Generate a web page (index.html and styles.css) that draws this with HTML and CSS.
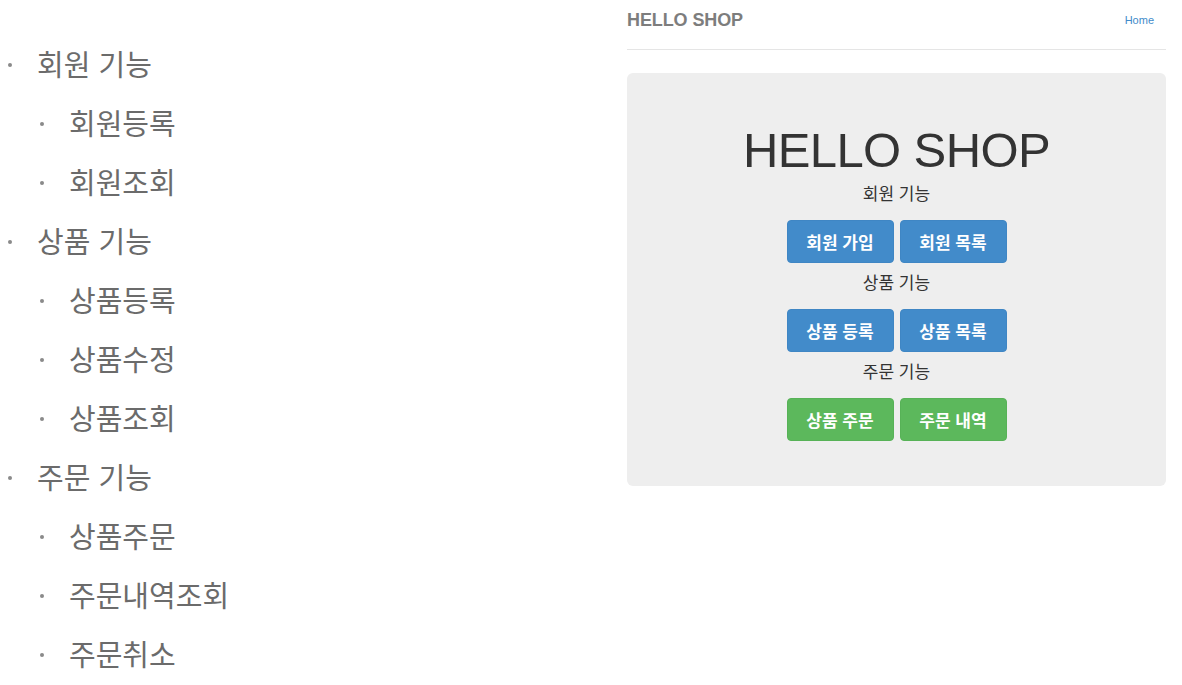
FILE: index.html
```html
<!DOCTYPE html>
<html lang="ko">
<head>
<meta charset="utf-8">
<title>HELLO SHOP</title>
<link rel="stylesheet" href="styles.css">
</head>
<body>
<div class="page">
  <ul class="outline">
    <li>
      <div class="row"><span class="dot"></span>회원 기능</div>
      <ul class="sub">
        <li class="row"><span class="dot"></span>회원등록</li>
        <li class="row"><span class="dot"></span>회원조회</li>
      </ul>
    </li>
    <li>
      <div class="row"><span class="dot"></span>상품 기능</div>
      <ul class="sub">
        <li class="row"><span class="dot"></span>상품등록</li>
        <li class="row"><span class="dot"></span>상품수정</li>
        <li class="row"><span class="dot"></span>상품조회</li>
      </ul>
    </li>
    <li>
      <div class="row"><span class="dot"></span>주문 기능</div>
      <ul class="sub">
        <li class="row"><span class="dot"></span>상품주문</li>
        <li class="row"><span class="dot"></span>주문내역조회</li>
        <li class="row"><span class="dot"></span>주문취소</li>
      </ul>
    </li>
  </ul>

  <div class="app">
    <header class="nav">
      <span class="brand">HELLO SHOP</span>
      <a class="home" href="#">Home</a>
    </header>
    <div class="jumbo">
      <h1 class="title">HELLO SHOP</h1>
      <p class="label">회원 기능</p>
      <div class="btns">
        <a class="btn primary" href="#">회원 가입</a>
        <a class="btn primary" href="#">회원 목록</a>
      </div>
      <p class="label">상품 기능</p>
      <div class="btns">
        <a class="btn primary" href="#">상품 등록</a>
        <a class="btn primary" href="#">상품 목록</a>
      </div>
      <p class="label">주문 기능</p>
      <div class="btns">
        <a class="btn success" href="#">상품 주문</a>
        <a class="btn success" href="#">주문 내역</a>
      </div>
    </div>
  </div>
</div>
</body>
</html>
```
FILE: styles.css
```css
html, body {
  margin: 0;
  padding: 0;
  background: #fff;
}

body {
  font-family: "Liberation Sans", "Noto Sans CJK KR", sans-serif;
}

.page {
  display: flex;
  width: 1182px;
  height: 685px;
  overflow: hidden;
}

/* left outline */
.outline {
  list-style: none;
  margin: 0;
  padding: 34px 0 0 0;
  width: 627px;
  flex: none;
  font-family: "Noto Sans CJK KR", sans-serif;
  font-size: 29px;
  color: #6b6b6b;
}

.outline ul {
  list-style: none;
  margin: 0;
  padding: 0 0 0 32px;
}

.row {
  display: flex;
  align-items: center;
  height: 59px;
  line-height: 59px;
  white-space: nowrap;
}

.dot {
  width: 4px;
  height: 4px;
  border-radius: 50%;
  background: #8a8a8a;
  margin: 3px 25px 0 8px;
  flex: none;
}

/* right app */
.app {
  width: 539px;
  flex: none;
}

.nav {
  display: flex;
  justify-content: space-between;
  align-items: flex-start;
  height: 50px;
  box-sizing: border-box;
  border-bottom: 1px solid #e5e5e5;
  padding-right: 12px;
}

.brand {
  font-family: "Liberation Sans", sans-serif;
  font-weight: bold;
  font-size: 18px;
  letter-spacing: -0.1px;
  line-height: 40px;
  color: #7d7d7d;
}

.home {
  font-family: "Liberation Sans", sans-serif;
  font-size: 11px;
  line-height: 40px;
  color: #428bca;
  text-decoration: none;
}

.jumbo {
  margin-top: 23px;
  background: #eee;
  border-radius: 6px;
  padding: 50px 0 45px;
  display: flex;
  flex-direction: column;
  align-items: center;
}

.title {
  margin: 0;
  font-family: "Liberation Sans", sans-serif;
  font-weight: normal;
  font-size: 49px;
  letter-spacing: -0.6px;
  line-height: 54px;
  color: #333;
}

.label {
  margin: 9px 0 0;
  font-family: "Noto Sans CJK KR", sans-serif;
  font-size: 17px;
  line-height: 20px;
  color: #333;
}

.title + .label {
  margin-top: 6px;
}

.btns {
  display: flex;
  gap: 6px;
  margin-top: 17px;
}

.btn {
  display: block;
  width: 107px;
  height: 43px;
  box-sizing: border-box;
  border-radius: 4px;
  border: 1px solid transparent;
  font-family: "Noto Sans CJK KR", sans-serif;
  font-weight: bold;
  font-size: 17px;
  line-height: 41px;
  text-align: center;
  color: #fff;
  text-decoration: none;
}

.btn.primary {
  background: #428bca;
  border-color: #3f86c4;
}

.btn.success {
  background: #5cb85c;
  border-color: #57b257;
}
```
